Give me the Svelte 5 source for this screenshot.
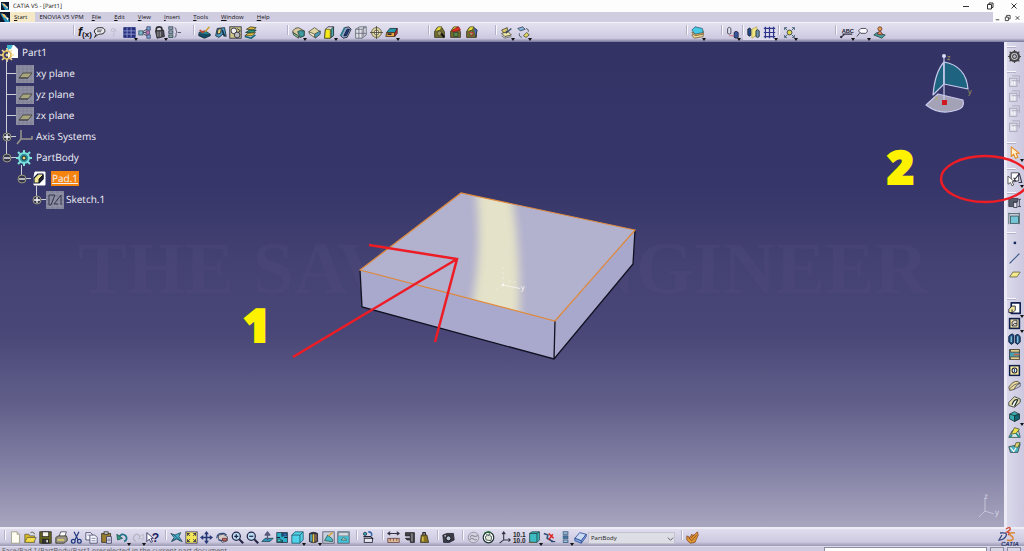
<script>
  const P = (d, f = 'none', s = '#223', w = 1) =>
    `<path d="${d}" fill="${f}" stroke="${s}" stroke-width="${w}" stroke-linejoin="round"/>`;
  const C = (x, y, r, f = 'none', s = '#223', w = 1) =>
    `<circle cx="${x}" cy="${y}" r="${r}" fill="${f}" stroke="${s}" stroke-width="${w}"/>`;
  const R = (x, y, w, h, f = 'none', s = '#223', k = 1) =>
    `<rect x="${x}" y="${y}" width="${w}" height="${h}" fill="${f}" stroke="${s}" stroke-width="${k}"/>`;
  const T = (x, y, t, size, f = '#111', extra = '') =>
    `<text x="${x}" y="${y}" font-size="${size}" fill="${f}" font-family="Liberation Sans, sans-serif" ${extra}>${t}</text>`;

  const camera = P('M2 14V7L5 2H11L14 7V14Z', '#77712f', '#332') + P('M2 7L6 1H11L9 5Z', '#e8dc3a', '#553') + C(8, 9, 3, '#9a9460', '#442');
  const ghost = R(2, 4, 9, 10, '#dddbe7', '#a3a1b4') + P('M5 1H14V10M5 7H14', 'none', '#a7a5b8') + P('M5 8V12M8 8V12', 'none', '#f8f8fc', 1.5);
  const sheet = P('M3 1H10L13 4V15H3Z', '#fdfcf0', '#99967c') + P('M10 1V4H13', '#ddd', '#99967c');

  const icons = {
    formula: T(0, 12, 'f', 15, '#111', 'font-style="italic" font-weight="bold"') + T(5, 14, '(x)', 10, '#111', 'font-weight="bold"'),
    comment: P('M2 14L4 10C-1 7 3 2 8 2C16 1 17 9 10 10C8 10 6 10 2 14Z', '#e9e7ee', '#222', 1.2) + P('M5 5H11M5 7H10', 'none', '#444'),
    faint: C(6, 5, 2, 'none', '#b9b7c8') + P('M8 3L10 6L7 9V13', 'none', '#b9b7c8'),
    table: R(1, 2, 14, 12, '#26307c', '#26307c') + P('M1 6H15M1 10H15M5 2V14M10 2V14', 'none', '#98a0dc', 1),
    relations: P('M6 8H10M6 7L12 3M6 9L12 13', 'none', '#334') + R(1, 6, 5, 5, '#7fb8cc', '#356') + R(11, 1, 4, 4, '#8ad', '#346') + R(10, 6, 4, 4, '#c7b', '#446') + R(11, 11, 4, 4, '#8ad', '#346'),
    lock: P('M4 6V4C4 0 11 0 11 4V6', 'none', '#333', 2) + P('M3 6L13 5L14 13L5 15Z', '#4a4a52', '#222') + P('M6 7V13M9 7V13', 'none', '#aaa'),
    rules: R(1, 1, 5, 3, '#9ab', '#345') + R(1, 6, 5, 3, '#9ab', '#345') + R(1, 11, 5, 3, '#8a9', '#345') + P('M8 2Q10 2 10 5V6L11 7.500L10 9V11Q10 14 8 14M12 8H16', 'none', '#445'),
    draft1: P('M1 8L8 13L15 10L9 6Z', '#258899', '#133') + P('M2 5L6 8L8 6', 'none', '#b43', 2) + P('M9 7L14 1', 'none', '#cda23a', 2) + P('M1 9V12L8 15L15 12V10', '#134d66', '#123'),
    draft2: P('M2 12L4 3L13 2L15 13L11 10L6 14Z', '#4e9fc4', '#123') + P('M5 4L9 3L8 9L4 10Z', '#e4d97a', '#223') + P('M10 5L13 13', 'none', '#134', 2),
    draft3: R(1, 1, 14, 14, '#cfc68a', '#223') + C(6, 6, 3.5, '#eee', '#223') + C(10, 11, 3.500, '#bbb', '#223') + P('M10 3L14 6L11 8', 'none', '#223'),
    draft4: P('M3 4L8 1L15 2L11 5Z', '#d8b640', '#442') + P('M2 8L7 5L15 5L11 9Z', '#28947f', '#133') + P('M1 12L5 9L14 8L10 12Z', '#e0c040', '#442') + P('M1 13L9 15L14 11', 'none', '#167', 2),
    fillet: P('M1 6Q3 2 8 2L15 6V12L10 14L1 8Z', '#d7c9a0', '#443') + P('M7 7Q9 5 15 6V12L10 14Z', '#3f9a9e', '#244') + P('M1 8L8 12V15L2 11Z', '#8b8', '#344'),
    chamfer: P('M1 7L8 2L15 7L8 14Z', '#e2d5a4', '#554') + P('M8 10L15 6V10L9 15Z', '#4b9cb8', '#344') + P('M1 7L8 10V14L2 10Z', '#f4ecd0', '#554'),
    draft: P('M3 4L6 1H13L12 12L9 15H2Z', '#eee', '#223') + P('M3 4H9V15H2Z', '#f7ea18', '#552') + P('M10 4L13 1V12L10 14Z', '#4aa', '#233'),
    shell: P('M2 12L7 2L12 1L15 4L10 14L5 15Z', '#8fa4c4', '#223') + P('M6 12L10 4L13 4L9 12Z', '#1f3c7c', '#113') + P('M2 12L7 2', 'none', '#297a8e', 2),
    thickness: P('M2 4L7 1H15V11L10 15H2Z', '#e4e4ec', '#566') + P('M2 4H10V15M10 4L15 1M6 2V15M2 9H15M12 1V13', 'none', '#667'),
    thread: C(8, 8, 6, '#eadba8', '#553') + C(8, 8, 3, '#eee', '#553') + P('M8 0V16M0 8H16', 'none', '#443'),
    replace: P('M2 8L6 3H15L12 9Z', '#2596ae', '#133') + P('M2 8H12V13H1Z', '#e6a43a', '#432') + P('M12 9L15 3V9L12 13Z', '#c33', '#422') + P('M3 10H8', 'none', '#224', 2),
    cam1: camera + P('M10 9L14 14', 'none', '#111', 2.500),
    cam2: camera + P('M3 6L9 2L12 1L14 5L7 7Z', '#dc2d22', '#822') + R(6, 8, 5, 5, '#5b8a4d', '#343'),
    cam3: camera + P('M11 2L15 5L13 13', '#446bb5', '#224') + P('M5 8H10L8 13', 'none', '#c33'),
    sheets: P('M2 5L9 2V6L5 9Z', '#ddc96c', '#443') + P('M2 9L6 13L14 11L10 7Z', '#eee5a5', '#443') + P('M7 9L14 3', 'none', '#346', 1.500) + P('M2 12L6 15L14 13', 'none', '#665'),
    swap: P('M1 3L7 1L10 4L4 6Z', '#8ab4dc', '#345') + P('M8 12L12 8L15 11L11 14Z', '#e8db60', '#443') + P('M11 3Q15 4 14 7M6 14Q2 13 3 9', 'none', '#345'),
    layers: P('M1 11L4 15L15 13V8Z', '#eedc98', '#764') + P('M1 8L5 12L15 10V6Z', '#f5a550', '#764') + P('M1 5L5 1L14 3L15 8L5 10Z', '#46c9e4', '#367'),
    cyls: P('M2 3Q4 0 6 3V9Q4 11 2 9Z', '#dfe4f0', '#334') + P('M4 12H9', 'none', '#c55') + P('M10 8Q12 5 15 8V14Q12 16 10 14Z', '#3555a0', '#223'),
    cyls2: P('M1 4Q3 1 5 4V11Q3 14 1 11Z', '#234c86', '#223') + P('M6 4L12 1V11L6 15Z', '#f0e880', '#bba85a') + P('M11 6Q13 3 15 6V13Q13 15 11 13Z', '#69a', '#223'),
    grid: P('M1 3H15M1 8H15M1 13H15M3 1V15M8 1V15M13 1V15', 'none', '#30358c', 1.500),
    snap: C(8, 8, 3, '#e0d64a', '#234') + P('M2 2L5 5M14 2L11 5M2 14L5 11M14 14L11 11M2 5V2H5M14 5V2H11M2 11V14H5M14 11V14H11', 'none', '#356'),
    abc: T(2, 8, 'ABC', 7, '#223', 'font-weight="bold"') + P('M3 10H15M6 10L1 14', 'none', '#334', 1.400) + C(1.500, 13.500, 1, '#111'),
    tag: P('M6 3H12Q16 6 12 9H6L3 6Z', '#fafafe', '#334') + P('M5 8L1 13', 'none', '#334'),
    stamp: P('M1 11L5 8L15 11L11 15Z', '#44a3a3', '#244') + P('M5 10L8 6H9L12 11Z', '#d98b55', '#633') + C(8.500, 3.500, 2.500, '#e6a24a', '#633'),
    new: sheet,
    open: P('M1 4H6L7 6H13V14H1Z', '#d8b520', '#664') + P('M1 14L4 8H15L12 14Z', '#f5dd48', '#664') + P('M8 2Q12 0 13 4', 'none', '#553'),
    save: R(1, 1, 14, 14, '#6b6b20', '#222') + R(4, 1, 8, 6, '#f2f2ea', '#222') + R(4, 10, 8, 5, '#333', '#222') + R(9, 11, 2, 3, '#ddd', '#ddd', 0),
    print: P('M5 7L7 1H14L12 7Z', '#fff', '#445') + P('M1 8L4 6H14L15 9V12L11 15H1Z', '#99938a', '#332') + P('M3 11H11', 'none', '#e2d460', 2),
    cut: P('M5 1L10 11M11 1L6 11', 'none', '#223a80', 1.500) + C(4, 12.500, 2.300, 'none', '#223a80', 1.600) + C(11.500, 12.500, 2.300, 'none', '#223a80', 1.600),
    copy: P('M1 2H7L9 4V11H1Z', '#f5f6ff', '#446') + P('M6 5H12L15 8V15H6Z', '#f5f6ff', '#446') + P('M8 9H13M8 12H13M3 5H6', 'none', '#779'),
    paste: P('M2 3H13V14H2Z', '#9b7d30', '#332') + R(5, 1, 5, 3, '#ccc', '#333') + P('M8 7H14V15H8Z', '#eef', '#335') + P('M9 10H13M9 12H13', 'none', '#557'),
    undo: P('M3 9Q7 1 12 6Q15 10 10 13', 'none', '#22748a', 2.200) + P('M1 4L2 11L8 9Z', '#2e9a80', '#255'),
    redo: P('M12 8Q8 1 4 6Q1 10 6 13', 'none', '#b3b1c2', 1.500) + P('M15 4V10L9 9Z', '#dddbe8', '#b3b1c2'),
    help: P('M1 2L1 13L4 10L6 14L8 13L6 9H9Z', '#fff', '#225') + T(7, 13, '?', 15, '#1b2260', 'font-weight="bold"'),
    fly: P('M1 3L6 5L13 2L11 7L15 13L8 10L2 13L5 8Z', '#43b5cf', '#245') + P('M4 4L13 12M2 12L8 9', 'none', '#246'),
    fit: R(1, 1, 14, 14, '#f3e558', '#447') + P('M2 2L6 6M14 2L10 6M2 14L6 10M14 14L10 10M3 6V3H6M13 6V3H10M3 10V13H6M13 10V13H10', 'none', '#224'),
    pan: P('M8 0L11 4H9V7H12V5L16 8L12 11V9H9V12H11L8 16L5 12H7V9H4V11L0 8L4 5V7H7V4H5Z', '#253878', '#253878', 0),
    rotate: P('M3 5L9 4L14 7V12L8 14L3 10Z', '#d5ccc8', '#445') + P('M1 9Q1 2 10 3L13 5M3 11L10 12', 'none', '#2b4d7d', 1.500) + P('M8 9H13V12H8Z', '#c66', '#633'),
    zoomin: P('M10 10L15 15', 'none', '#224', 2.600) + C(6.500, 6.500, 5, '#b9dcf2', '#224', 1.500) + P('M4 6.500H9M6.500 4V9', 'none', '#224', 1.500),
    zoomout: P('M10 10L15 15', 'none', '#224', 2.600) + C(6.500, 6.500, 5, '#b9dcf2', '#224', 1.500) + P('M4 6.500H9', 'none', '#224', 1.500),
    normal: P('M1 13L5 9H15L11 13Z', '#2e93b4', '#245') + P('M8 11V3M8 1L5 5H11Z', '#779', '#557', 1.500),
    multi: R(1, 2, 13, 12, '#2fb0c8', '#234') + P('M7.500 2V7M1 8H5M10 8H14M7.500 11V14', 'none', '#123', 1.5) + R(9, 3, 4, 3, '#4169b5', '#247') + R(2, 10, 4, 3, '#50d0d0', '#255'),
    cube: P('M1 5L5 1H15V11L11 15H1Z', '#4fd3ea', '#256') + P('M1 5H11V15M11 5L15 1', 'none', '#256'),
    render: P('M3 3Q8 0 13 3V13Q8 16 3 13Z', '#334', '#222') + P('M5 4V13', 'none', '#5ac', 2) + P('M8 4V14', 'none', '#e8cc43', 2) + P('M11 4V13', 'none', '#a76', 1.500),
    view1: R(1, 1, 14, 14, '#c9cfdd', '#556') + P('M3 12L7 5L13 10V13Z', '#45bdc8', '#355') + P('M8 6L13 2', 'none', '#dca63a', 2),
    view2: R(1, 1, 14, 14, '#45c4d8', '#556') + P('M2 2H14V6H2Z', '#d8dbe8', '#888') + P('M5 11Q8 6 12 11Z', '#f1f2de', '#355'),
    update: R(4, 9, 10, 5, '#e5e4ed', '#223') + P('M3 7H12L15 10', 'none', '#223', 1.500) + C(5, 3.500, 2, '#3ab', '#234') + P('M9 1Q14 1 13 6', 'none', '#36a', 2),
    measure: P('M1 3H15M4 1L1 3L4 5M12 1L15 3L12 5', 'none', '#334', 1.300) + R(1, 9, 14, 5, '#e0b996', '#644') + P('M4 9V12M8 9V12M12 9V12', 'none', '#644'),
    caliper: P('M3 2H14V14H9V11H5L3 9H9V6H3Z', '#44434b', '#222') + P('M11 3V13', 'none', '#bbb'),
    weight: P('M4 5H11L13 14H3Z', '#8a7420', '#332') + P('M6 5V2H9V5', 'none', '#222', 1.500) + P('M6 7V13', 'none', '#e6d25a', 1.500),
    photo: P('M1 5L6 3H14L15 11L9 14H2Z', '#3c3b48', '#223') + C(8, 9, 3, '#b8c4d8', '#111') + P('M3 6H5', 'none', '#ddd', 1.500),
    swirl: C(8, 8, 6.500, '#d5d3df', '#9593a4', 1.200) + P('M4 8Q5 4 8 6Q11 8 13 5M3 11Q6 8 8 10Q10 12 12 10', 'none', '#9593a4', 1.500),
    hand: C(8, 8, 6.500, '#fff', '#233', 1.500) + P('M5 11L4 7L6 6L6 4L8 6L9 3L10 6L12 7L11 12Z', '#e2e6d8', '#344') + P('M3 3Q7 0 11 2', 'none', '#263', 2),
    axis: P('M7 2V11L2 15M7 11H15M13 9L15 11L13 13M5 4L7 1L9 4', 'none', '#334', 1.300),
    num: T(0, 7, '10.1', 8, '#222', 'font-weight="bold"') + T(0, 15, '10.0', 8, '#222', 'font-weight="bold"'),
    body: P('M2 3L5 1H14V11L11 14H2Z', '#3dbcc4', '#244') + P('M2 3H11V14M11 3L14 1', 'none', '#244') + P('M1 14H7', 'none', '#664', 1.500),
    nohist: P('M1 3L6 5L5 9L12 13', 'none', '#357', 2) + P('M7 3L13 9M12 4L7 11', 'none', '#d22', 1.800) + P('M10 13H15', 'none', '#346', 1.500),
    tree: R(5, 1, 6, 3, '#a5c3e0', '#357') + R(5, 6, 6, 3, '#4679a8', '#357') + R(5, 11, 6, 3, '#a5c3e0', '#357') + P('M4 1V15', 'none', '#bcd'),
    eraser: P('M1 9L7 2L15 4L9 12Z', '#c9d9f2', '#2b4b96') + P('M1 9L9 12V15L1 12ZM9 12L15 4V7L9 15', '#8aaee0', '#2b4b96'),
    apply: P('M1 6L5 8L7 4L9 6L14 1L15 5L11 14L5 15L1 11Z', '#dd9a32', '#8a4a2a') + P('M3 8L7 12L13 5M10 4L6 9', 'none', '#9d4a22', 1.200),
    gear: C(8, 8, 5.500, '#c4c2cc', '#444', 2.500) + C(8, 8, 2.500, '#b4b2bc', '#222') + P('M8 0V3M8 13V16M0 8H3M13 8H16M2 2L4 4M14 2L12 4M2 14L4 12M14 14L12 12', 'none', '#444', 1.500),
    ghost,
    arrow: P('M4 1V13L7 10L9 15L12 14L10 9H14Z', '#fff0d0', '#e58b24', 1.300),
    sketch: P('M4 1H13V11H4Z', '#fff', '#334') + P('M6 12L14 2L17 13H13M7 7L10 12', 'none', '#334', 1.300) + P('M0 5V15L3 13L5 17L7 16L5 12H8Z', '#fff', '#444'),
    pos: P('M1 3H12V7H7V13H1Z', '#555c69', '#334') + R(7, 8, 4, 6, '#e4e2ec', '#334') + P('M14 4V13M12 4H16M12 13H16', 'none', '#334'),
    box: R(3, 5, 10, 9, '#76c4d8', '#355') + P('M1 1V15M1 2H14M14 1V15', 'none', '#355'),
    point: R(7, 7, 3, 3, '#16285c', '#16285c', 0),
    line: P('M2 14L14 2', 'none', '#3b5888', 1.500),
    plane: P('M2 11L6 5H15L11 11Z', '#f7e88e', '#775', 1.200),
    pad: P('M4 1H15V14H4Z', '#fff', '#12204e', 2) + P('M1 9L5 5H9V10L6 13H1Z', '#f0e79a', '#113') + P('M5 9V13', 'none', '#113'),
    pocket: R(2, 2, 12, 12, '#efe2a0', '#12204e', 2) + P('M5 11V6L8 4H11V11Z', '#dcd7c8', '#223') + P('M5 11L8 8H11', 'none', '#223'),
    shaft: P('M1 4Q6 -1 7 3V12L4 14L1 11ZM9 3Q13 0 15 5V11L12 14L9 12Z', '#22517f', '#102448', 1.200) + P('M4 4V11M12 4V12', 'none', '#8cd', 1.5),
    groove: R(2, 2, 12, 12, '#4aa1b4', '#234') + P('M3 2H14V5H3ZM3 11H14V14H3Z', '#f0dc98', '#543') + P('M7 8H14', 'none', '#c64', 2),
    hole: R(2, 2, 12, 12, '#f5e89c', '#12204e', 1.800) + C(8, 8, 3, '#fff', '#223', 1.300) + P('M8 6V10', 'none', '#248', 1.500),
    rib: P('M1 10Q6 2 12 3L15 5Q10 7 7 13L2 14Z', '#ead99c', '#443') + P('M2 12Q7 6 14 5M7 13L15 9V5', 'none', '#556'),
    slot: P('M1 9L8 2L15 5V9L8 15L1 13Z', '#ecdfae', '#233') + P('M5 12Q8 4 12 6L8 14', '#fff', '#233', 1.600),
    solid: P('M2 5L8 2L14 5V11L8 14L2 11Z', '#36b0b4', '#233') + P('M2 5L8 7V14M8 7L14 5', 'none', '#233') + P('M8 7L14 5V11L8 14Z', '#167', '#233'),
    loft1: P('M1 14L5 6L13 6L15 14Z', '#d5e9e6', '#344') + P('M4 10L8 2L14 4L10 9Z', '#efe04a', '#453') + P('M10 9L14 14M5 11L2 14', 'none', '#288', 2),
    loft2: P('M1 7L3 14H12L15 4L11 5Z', '#48b5c4', '#344') + P('M8 7L10 2L15 2L12 8Z', '#e4d26c', '#453') + P('M3 8L7 13L10 8', 'none', '#eee', 1.500)
  };

  // Weights give each stretch of a bar its share of the window; a trailing "v" marks a fly-out menu.
  const topBar = [
    { gap: 74 },
    { w: 106, items: 'formula comment faint table:v relations lock:v rules' },
    { gap: 14 },
    { w: 64, items: 'draft1 draft2 draft3 draft4' },
    { gap: 30 },
    { w: 111, items: 'fillet:v chamfer draft:v shell thickness thread replace:v' },
    { gap: 30 },
    { w: 50, items: 'cam1 cam2 cam3' },
    { gap: 16 },
    { w: 35, items: 'sheets:v swap:v' },
    { gap: 156 },
    { w: 19, items: 'layers:v' },
    { gap: 16 },
    { w: 19, items: 'cyls:v' },
    { gap: 2 },
    { w: 34, lit: true, items: 'cyls2 grid:v' },
    { gap: 2 },
    { w: 19, items: 'snap:v' },
    { gap: 38 },
    { w: 51, items: 'abc:v tag:v stamp' },
    { gap: 137 }
  ];
  const bottomBar = [
    { gap: 5 },
    { w: 155, items: 'new open save print cut copy paste undo:v redo:v help' },
    { gap: 6 },
    { w: 185, items: 'fly fit pan rotate zoomin zoomout normal multi cube:v render:v view1 view2' },
    { gap: 6 },
    { w: 19, items: 'update' },
    { gap: 7 },
    { w: 49, items: 'measure caliper weight' },
    { gap: 6 },
    { w: 19, items: 'photo' },
    { gap: 6 },
    { w: 125, items: 'swirl hand axis num body:v nohist tree:v eraser' },
    { select: true, w: 87 },
    { gap: 7 },
    { w: 19, items: 'apply' },
    { gap: 323 }
  ];
  const sideBar = [
    { gap: 4 },
    { w: 18, items: 'gear' },
    { gap: 7 },
    { w: 63, items: 'ghost ghost ghost ghost' },
    { gap: 8 },
    { w: 18, items: 'arrow:v' },
    { gap: 8 },
    { w: 19, items: 'sketch:v' },
    { gap: 5 },
    { w: 34, items: 'pos box' },
    { gap: 6 },
    { w: 50, items: 'point line plane' },
    { gap: 16 },
    { w: 157, items: 'pad:v pocket:v shaft groove hole rib slot solid:v loft1 loft2' },
    { gap: 72 }
  ];
  const menus = ['File', 'Edit', 'View', 'Insert', 'Tools', 'Window', 'Help'];

  const planeTile =
    R(0, 0, 18, 18, '#8f90a2', 'none', 0) +
    P('M1 1H17M1 4H17M1 7H17M1 16H17M3 0V18M7 0V18M11 0V18M15 0V18', 'none', '#74758c', 0.5) +
    P('M3 13L7 8H16L12 13Z', '#a9a57c', '#4c4d4a') + P('M3 13H12', 'none', '#3f4050');
  const treeIcons = {
    plane: planeTile,
    axis: P('M5 2V11L1 16M5 11H16V8', 'none', '#9a998e', 1.500),
    partbody: C(8, 9, 5, '#2e8f96', '#6fdbe0', 2) + P('M8 1V5M8 13V17M0 9H4M12 9H16M2 3L5 6M14 3L11 6M2 15L5 12M14 15L11 12', 'none', '#7fe0d8', 2) + C(8, 9, 2, '#e9e07a', '#223'),
    pad: P('M4 2H14V15H3V7Z', '#fff', '#fff') + P('M3 13V8L7 4H12V9L8 13Z', '#f2e78e', '#111b40', 1.200) + P('M8 13V9L12 5V9Z', '#223', '#112'),
    sketch: R(0, 0, 18, 18, '#83849b', 'none', 0) + P('M0 3H18M0 7H18M0 11H18M0 15H18M4 0V18M9 0V18M14 0V18', 'none', '#a3a4b5', 0.5) + P('M3 4H9L5 14H3ZM8 13L15 4V14M8 13H12', 'none', '#333548', 1)
  };
  const tree = [
    { level: 0, icon: 'plane', label: 'xy plane' },
    { level: 0, icon: 'plane', label: 'yz plane' },
    { level: 0, icon: 'plane', label: 'zx plane' },
    { level: 0, icon: 'axis', label: 'Axis Systems', sign: '+' },
    { level: 0, icon: 'partbody', label: 'PartBody', sign: '-' },
    { level: 1, icon: 'pad', label: 'Pad.1', sign: '-', active: true },
    { level: 2, icon: 'sketch', label: 'Sketch.1', sign: '+' }
  ];
</script>

{#snippet logo()}
  <svg class="logo" viewBox="0 0 8 8" aria-hidden="true">
    <rect width="8" height="8" fill="#0c1830" />
    <path d="M0 1L5 3L8 8H4Z" fill="#2590b8" />
    <path d="M1 1L4 2L6 6L3 4Z" fill="#f5c878" />
    <path d="M5 4L7 5L6 7Z" fill="#fff" />
  </svg>
{/snippet}

{#snippet bar(parts)}
  {#each parts as part}
    {#if part.gap}
      <span class="space" style="flex-grow: {part.gap}"></span>
    {:else if part.select}
      <label class="pick" style="flex-grow: {part.w}">
        <select aria-label="In work object"><option>PartBody</option></select>
        <svg viewBox="0 0 8 8" aria-hidden="true"><path d="M1 3L4 6L7 3" fill="none" stroke="#556" /></svg>
      </label>
    {:else}
      <div class="group" class:lit={part.lit} style="flex-grow: {part.w}">
        {#each part.items.split(' ') as item}
          {@const name = item.split(':')[0]}
          <button class="tool" class:more={item.endsWith(':v')} aria-label={name}>
            <svg viewBox="0 0 16 16" aria-hidden="true">{@html icons[name]}</svg>
          </button>
        {/each}
      </div>
    {/if}
  {/each}
{/snippet}

<div class="app">
  <header class="title">
    {@render logo()}
    <h1>CATIA V5 - [Part1]</h1>
    <div class="winbtns">
      <button aria-label="Minimize"><svg viewBox="0 0 8 8"><path d="M1 4.500H7" /></svg></button>
      <button aria-label="Restore"><svg viewBox="0 0 8 8"><path d="M1.500 2.500H5.500V7H1.500ZM3 2.500V1H7V5.500H5.500" /></svg></button>
      <button aria-label="Close"><svg viewBox="0 0 8 8"><path d="M1.500 1.500L6.500 6.500M6.500 1.500L1.500 6.500" /></svg></button>
    </div>
  </header>

  <nav class="menu">
    {@render logo()}
    <button class="start"><u>S</u>tart</button>
    <button class="enovia">ENOVIA V5 VPM</button>
    {#each menus as m}
      <button><u>{m[0]}</u>{m.slice(1)}</button>
    {/each}
    <div class="docbtns">
      <button aria-label="Minimize document"><svg viewBox="0 0 8 8"><path d="M2 6H6" /></svg></button>
      <button aria-label="Restore document"><svg viewBox="0 0 8 8"><path d="M1.500 3H5V7H1.500ZM3 3V1H7V5H5" /></svg></button>
      <button aria-label="Close document"><svg viewBox="0 0 8 8"><path d="M2 2L6 6M6 2L2 6" /></svg></button>
    </div>
  </nav>

  <div class="strip top">{@render bar(topBar)}</div>

  <div class="middle">
    <main>
      <svg class="scene" viewBox="0 42 1004 485" preserveAspectRatio="none" aria-hidden="true">
        <defs>
          <clipPath id="face"><path d="M360 270L461 193L635 230L555 321Z" /></clipPath>
          <filter id="soft" x="-50%" y="-10%" width="200%" height="120%"><feGaussianBlur stdDeviation="4 1" /></filter>
        </defs>
        <text class="mark" x="78" y="293">THE SAV</text>
        <text class="mark" x="928" y="293" text-anchor="end">NGINEER</text>
        <path d="M360 270L362 307L554 359L555 321Z" fill="#a9a9ce" />
        <path d="M555 321L554 359L633 264L635 230Z" fill="#a8a8cc" />
        <path d="M360 270L461 193L635 230L555 321Z" fill="#b2b1ce" />
        <g clip-path="url(#face)">
          <path d="M475 180L510 185Q522 250 519 325L470 315Q484 250 475 180Z" fill="#e4e2c8" filter="url(#soft)" />
        </g>
        <path d="M360 270L362 307L554 359L633 264L635 230M555 321L554 359" fill="none" stroke="#111122" stroke-width="1.300" />
        <path d="M360 270L461 193L635 230L555 321Z" fill="none" stroke="#e08a3c" stroke-width="1.200" />
        <g stroke="#f6f6f4" fill="none" stroke-width="0.800">
          <path d="M503 285L520 288.500" />
          <path d="M503 284V264M509 281L516 282M502 286L493 292" stroke-dasharray="2 3" opacity="0.700" />
        </g>
        <circle cx="503" cy="285" r="1" fill="#fff" />
        <text x="521" y="290" font-size="7" fill="#fff">y</text>

        <g stroke="#c9c9ec" stroke-width="1.200" stroke-linejoin="round">
          <path d="M926 105L938 94L963 100Q965 108 957 110Q940 116 926 105Z" fill="#a3a2b6" />
          <path d="M944 62Q935 72 933 95L944 84Z" fill="#1e6480" />
          <path d="M944 62Q966 66 968 89L944 84Z" fill="#1e6480" />
          <path d="M944 56V102" />
        </g>
        <circle cx="944" cy="56" r="2" fill="#dcdcf4" />
        <rect x="942" y="100" width="5" height="5" fill="#d01820" />
        <g font-size="7" fill="#b5ab52"><text x="947" y="60">z</text><text x="968" y="94">y</text><text x="935" y="100">x</text></g>

        <path d="M985 499V511L979 517M985 511L994 514" fill="none" stroke="#c6c5d8" />
        <g font-size="8" fill="#dad9e8"><text x="984" y="499">z</text><text x="995" y="515">y</text></g>
      </svg>

      <div class="tree">
        <div class="root">
          <svg viewBox="0 0 20 18" aria-hidden="true">
            <path d="M8 1H14L18 5V14H8Z" fill="#fff" />
            <path d="M7 1H13L11 5Q7 5 7 9Z" fill="#3fb6cf" />
            <circle cx="7" cy="11" r="4" fill="none" stroke="#d9b75c" stroke-width="2" />
            <circle cx="7" cy="11" r="1.500" fill="#e8d69a" />
            <path d="M7 4V7M7 15V18M0 11H3M11 11H14M2 6L4 8M12 6L10 8M2 16L4 14M12 16L10 14" stroke="#f0dca0" stroke-width="1.600" />
          </svg>
          <span>Part1</span>
        </div>
        <ul>
          {#each tree as node}
            <li class="lv{node.level}">
              {#if node.sign}
                <button class="knob" aria-label={node.sign === '+' ? 'Expand' : 'Collapse'}>
                  <svg viewBox="0 0 10 10"><circle cx="5" cy="5" r="4" fill="#34344a" stroke="#99997f" /><path d={node.sign === '+' ? 'M2 5H8M5 2V8' : 'M2 5H8'} stroke="#fff" stroke-width="1.300" /></svg>
                </button>
              {:else}
                <span class="knob"></span>
              {/if}
              <svg class="pic" viewBox="0 0 18 18" aria-hidden="true">{@html treeIcons[node.icon]}</svg>
              <span class:active={node.active}>{node.label}</span>
            </li>
          {/each}
        </ul>
      </div>
    </main>
    <aside>{@render bar(sideBar)}</aside>
  </div>

  <div class="strip bottom">{@render bar(bottomBar)}</div>

  <footer>
    <span>Face/Pad.1/PartBody/Part1 preselected in the current part document</span>
    <input aria-label="Command" />
    <button aria-label="Command list"></button>
    <button aria-label="Help panel"></button>
  </footer>

  <svg class="brand" viewBox="0 0 26 20" aria-hidden="true">
    <path d="M8 2Q13 -1 12 3L9 5Q13 5 10 8" fill="none" stroke="#d0482c" stroke-width="1.300" />
    <path d="M2 6Q10 5 8 9Q6 13 1 13L4 8" fill="none" stroke="#36457e" stroke-width="1.300" />
    <path d="M17 6Q11 5 12 8Q17 11 14 13Q12 14 9 13" fill="none" stroke="#db8a3a" stroke-width="1.600" />
    <text x="3" y="19" font-size="6" font-weight="bold" font-style="italic" fill="#27356e">CATIA</text>
  </svg>

  <svg class="notes" viewBox="0 0 1024 551" preserveAspectRatio="none" aria-hidden="true">
    <g fill="none" stroke="#ee1c25" stroke-width="2.500">
      <path d="M293 357L457 259M369 245L457 259L435 342" />
      <ellipse cx="985" cy="179" rx="44" ry="23" />
    </g>
    <text x="243" y="342">1</text>
    <text x="887" y="184">2</text>
  </svg>
</div>

<style>
  :global(body) { margin: 0; }
  .app {
    position: relative;
    display: flex;
    flex-direction: column;
    height: 100vh;
    overflow: hidden;
    background: #cecbe2;
    color: #111;
    font: 6px/10px "Open Sans", "Noto Sans", sans-serif;
    text-rendering: geometricPrecision;
  }
  button { padding: 0; border: 0; background: none; color: inherit; font: inherit; }
  svg { display: block; }
  .title { display: flex; align-items: center; height: 12px; background: #fdfdfd; }
  .title .logo { margin: 0 4px 0 1px; }
  h1 { margin: 0; font: inherit; }
  .logo { width: 8px; height: 8px; }
  .winbtns { display: flex; gap: 16px; margin-left: auto; padding-right: 6px; }
  .winbtns svg { width: 8px; height: 8px; }
  .winbtns path, .docbtns path { fill: none; stroke: #333; stroke-width: 1; }
  .menu { display: flex; align-items: stretch; gap: 13px; height: 10px; background: #d0cde1; }
  .menu .logo { width: 10px; height: 10px; }
  .start { margin-left: -13px; padding: 0 8px 0 4px; background: #f6e9c8; }
  .enovia { margin: 0 -5px 0 -9px; }
  .docbtns { display: flex; gap: 3px; margin-left: auto; padding: 1px 3px 0 1px; background: #fdfdfd; }
  .docbtns svg { width: 7px; height: 8px; }

  .strip { display: flex; align-items: center; flex: none; }
  .top { height: 19px; border-top: 1px solid #f4f3fa; background: linear-gradient(#e4e2f0, #cdcae1 80%, #77769a); }
  .bottom { height: 17px; border-top: 2px solid #eeedf6; background: linear-gradient(#dfddee, #cdcae1 75%, #9b99b4); }
  .space { flex: 0 1 0; }
  .group {
    position: relative;
    display: flex;
    align-items: center;
    justify-content: space-between;
    flex: 1 1 0;
    min-width: 0;
  }
  .group::before { content: ""; position: absolute; left: 0; top: 0; width: 1px; height: 10px; background: #f8f8fc; box-shadow: -1px 0 #b4b2c8; }
  .lit { background: #dedcec; }
  .tool { position: relative; flex: none; width: 15px; height: 15px; }
  .tool:first-child { margin-left: 3px; }
  .tool svg { width: 13px; height: 13px; margin: 1px; overflow: visible; }
  .more::after {
    content: "";
    position: absolute;
    right: -1px;
    bottom: -1px;
    border: 2px solid transparent;
    border-top: 3px solid #111;
    border-bottom: 0;
  }
  .pick { position: relative; flex: 1 1 0; min-width: 0; }
  .pick select {
    display: block;
    width: 100%;
    height: 12px;
    padding: 0 0 0 2px;
    border: 1px solid #c3c2cf;
    border-radius: 0;
    background: #dddde6;
    color: #222;
    font: inherit;
    appearance: none;
  }
  .pick svg { position: absolute; right: 1px; top: 3px; width: 7px; height: 7px; }

  .middle { display: flex; flex: 1; min-height: 0; }
  main {
    position: relative;
    flex: 1;
    background: linear-gradient(#333366, #37366a 30%, #444272 46%, #494777 60%, #605e89 74%, #807ea2 87%, #a8a5bf);
  }
  .scene { position: absolute; inset: 0; width: 100%; height: 100%; font-family: "Open Sans", sans-serif; }
  .mark { font: bold 74px "Liberation Serif", serif; fill: #5a5486; fill-opacity: 0.2; }
  aside {
    display: flex;
    flex-direction: column;
    align-items: flex-start;
    width: 17px;
    border-left: 3px solid #eceaf5;
    background: linear-gradient(90deg, #dad8ea, #cbc8e0);
  }
  aside .group { flex-direction: column; min-height: 0; }
  aside .tool:first-child { margin: 3px 0 0; }
  aside .group::before { left: 0; width: 9px; height: 1px; box-shadow: 0 1px #b4b2c8; }
  aside .more::after { right: -2px; bottom: -2px; }

  .tree { position: relative; color: #f1f1f6; font: 10px/21px "Open Sans", "Noto Sans", sans-serif; }
  .root { display: flex; align-items: center; height: 21px; gap: 2px; }
  .root svg { width: 20px; height: 18px; }
  ul { margin: 0; padding: 0; list-style: none; }
  li { position: relative; display: flex; align-items: center; height: 21px; }
  .lv0 { padding-left: 2px; }
  .lv1 { padding-left: 17px; }
  .lv2 { padding-left: 32px; }
  li::before { content: ""; position: absolute; top: -11px; width: 9px; height: 21px; margin-left: 4px; border: solid #cfcfdc; border-width: 0 0 1px 1px; }
  li:first-child::before { top: -3px; height: 13px; }
  .lv1::before, .lv2::before { top: -3px; height: 13px; }
  .knob { position: relative; z-index: 1; width: 10px; height: 10px; margin-right: 4px; }
  .pic { position: relative; width: 18px; height: 18px; margin-right: 2px; }
  .active { padding: 0 1px; background: #f5830f; line-height: 15px; text-decoration: underline; }

  footer { display: flex; flex: none; height: 5px; padding-right: 3px; overflow: hidden; border-top: 1px solid #dddbea; box-sizing: border-box; }
  footer span { flex: 1; padding-left: 2px; color: #555; font-size: 7px; }
  footer input { width: 16%; height: 10px; box-sizing: border-box; border: 1px solid #8d8ba2; background: #fff; padding: 0; }
  footer button { width: 14px; height: 10px; margin-left: 3px; border: 1px solid #8d8ba2; background: #d9d7e6; }

  .brand { position: absolute; right: 0; bottom: 4px; width: 26px; height: 20px; font-family: "Liberation Sans", sans-serif; }
  .notes { position: absolute; inset: 0; width: 100%; height: 100%; pointer-events: none; }
  .notes text { font: 800 46px "Open Sans", sans-serif; fill: #fff200; stroke: #fff200; stroke-width: 2; }
</style>
